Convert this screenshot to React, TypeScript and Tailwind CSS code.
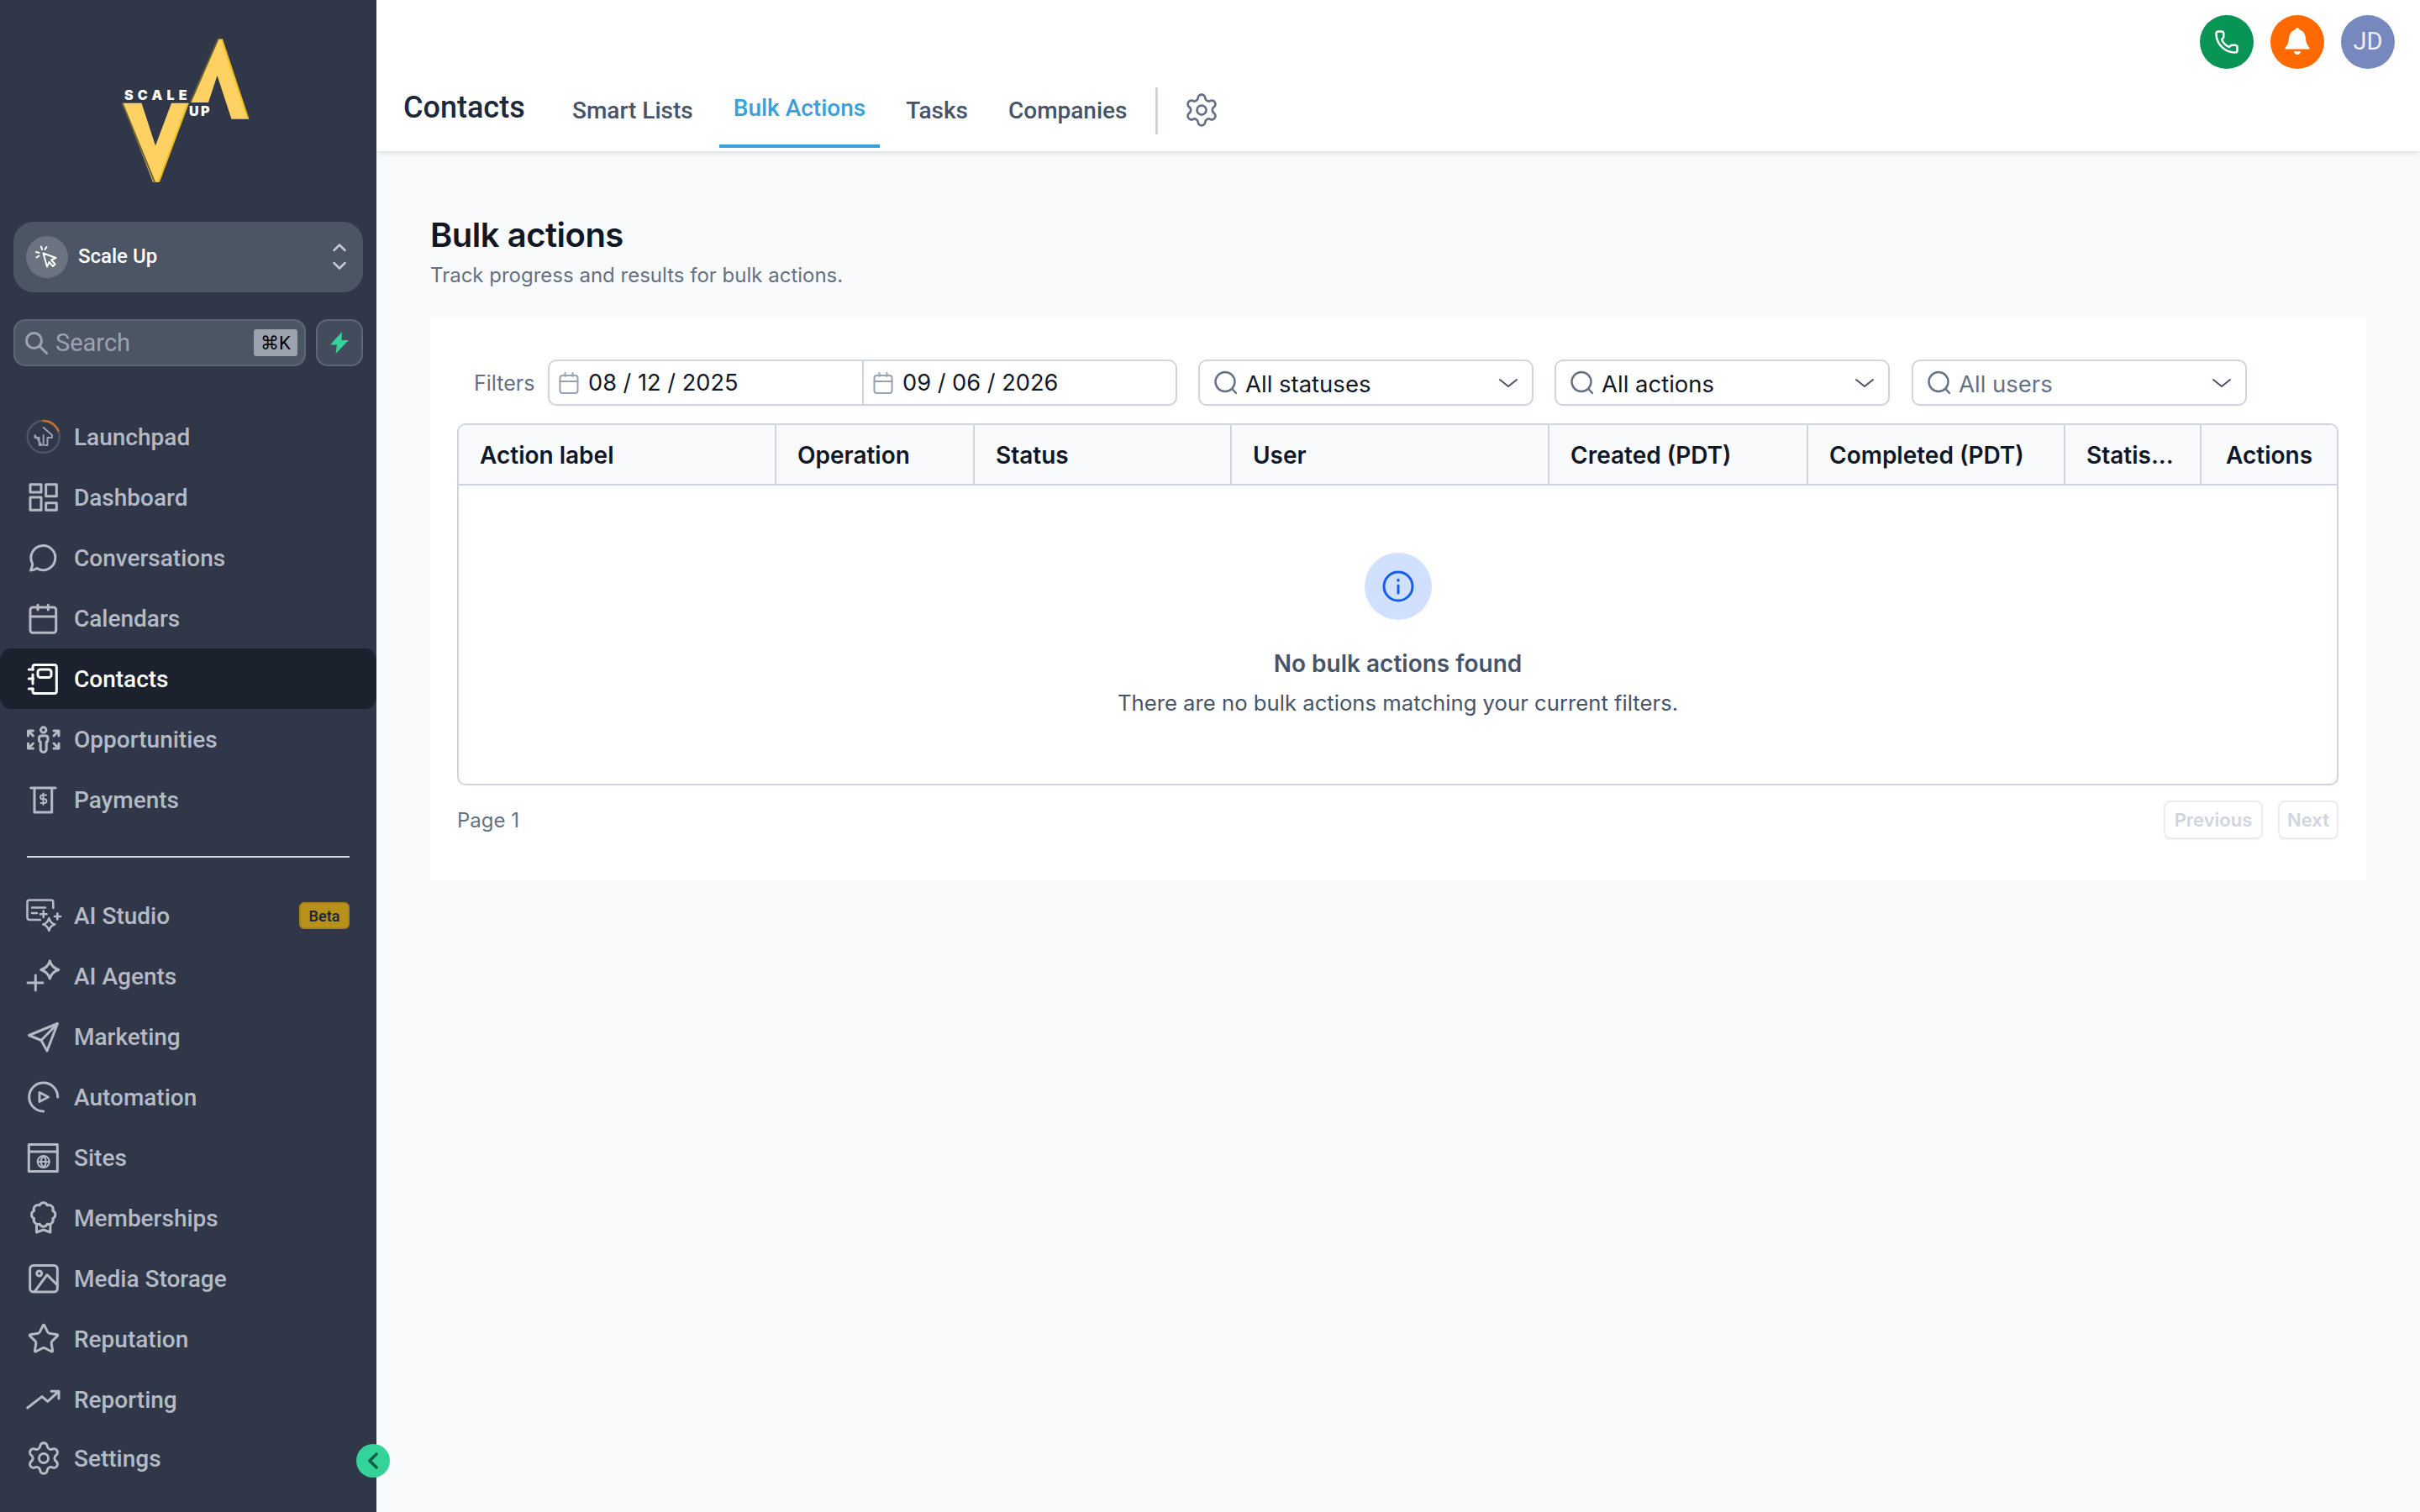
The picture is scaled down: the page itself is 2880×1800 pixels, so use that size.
import React from "react";
import { Settings, Star, Phone } from "lucide-react";

const Svg = ({ children, width = 3 }: { children: React.ReactNode; width?: number }) => (
  <svg width="44" height="44" viewBox="0 0 44 44" fill="none" stroke="currentColor" strokeWidth={width} strokeLinecap="round" strokeLinejoin="round">
    {children}
  </svg>
);

// eight-lobed badge outline
const scallop = () => {
  let d = "";
  for (let i = 0; i <= 8; i++) {
    const a = (i * Math.PI) / 4 - Math.PI / 8;
    const x = (21.7 + 12 * Math.cos(a)).toFixed(1);
    const y = (18 + 12 * Math.sin(a)).toFixed(1);
    d += i === 0 ? `M${x} ${y}` : ` A5 5 0 0 1 ${x} ${y}`;
  }
  return d;
};

const LaunchpadIcon = () => (
  <svg width="44" height="44" viewBox="0 0 44 44" fill="none" strokeLinecap="round" strokeLinejoin="round">
    <circle cx="21.7" cy="22" r="19" stroke="#4b5563" strokeWidth="2.5" />
    <path d="M21.7 3a19 19 0 0 1 17.5 11.5" stroke="#c2722e" strokeWidth="2.5" />
    <path d="M21.7 11 32 20v3h-5.5v9h-3M19.7 32h-3v-9h-5.2v-3Z" stroke="#9aa0ac" strokeWidth="2" />
    <path d="M21.7 20v12" stroke="#9aa0ac" strokeWidth="2" />
  </svg>
);
const DashboardIcon = () => (
  <Svg>
    <rect x="6" y="6.7" width="13" height="9.3" />
    <rect x="24.7" y="6.7" width="12.6" height="14" />
    <rect x="6" y="22" width="13" height="15.3" />
    <rect x="24.7" y="28.7" width="12.6" height="8.6" />
  </Svg>
);
const ChatIcon = () => (
  <Svg>
    <path d="M6.5 37c1.5-3.5 2.5-6 2.1-8A14.5 14.5 0 1 1 14 34.6c-2 1.4-4.5 2.1-7.5 2.4Z" />
  </Svg>
);
const CalendarIcon = () => (
  <Svg>
    <rect x="6" y="9" width="30.7" height="30.3" rx="3" />
    <path d="M6 20h30.7M15 6.3V12M27.3 6.3V12" />
  </Svg>
);
const ContactsIcon = () => (
  <Svg>
    <path d="M9 11V8a2.5 2.5 0 0 1 2.5-2.5h23.3a2.5 2.5 0 0 1 2.5 2.5v29a2.5 2.5 0 0 1-2.5 2.5H11.5A2.5 2.5 0 0 1 9 37v-3M9 17v11" />
    <rect x="15" y="11" width="16" height="9.5" rx="3" />
    <path d="M4.3 11h5M4.3 22h5M4.3 34h5" />
  </Svg>
);
const OpportunitiesIcon = () => (
  <Svg>
    <circle cx="21.7" cy="11" r="3.2" />
    <path d="M16.5 20.5c0-1.5 1-2.5 2.5-2.5h5.4c1.5 0 2.5 1 2.5 2.5v3c0 1-.7 1.5-1.7 1.5v9a3.5 3.5 0 0 1-7 0v-9c-1 0-1.7-.5-1.7-1.5Z" />
    <path d="M3.5 18v-6h6M3.5 12l6 6M40 18v-6h-6M40 12l-6 6M3.5 27v6h6M3.5 33l6-6M40 27v6h-6M40 33l-6-6" />
  </Svg>
);
const PaymentsIcon = () => (
  <Svg>
    <path d="M6.7 8H36M11 8v29h20.7V8" />
    <path d="M25 16.5h-4.5a2.2 2.2 0 0 0 0 4.8h2.5a2.2 2.2 0 0 1 0 4.8h-4.5M21.5 14.5V28" strokeWidth="2" />
  </Svg>
);
const AiStudioIcon = () => (
  <Svg width={2.6}>
    <path d="M18 27H5a2.5 2.5 0 0 1-2.5-2.5V6A2.5 2.5 0 0 1 5 3.5h26A2.5 2.5 0 0 1 33.3 6v7M8 12.5h16M8 19h6" />
    <path d="M28.3 25c1 4 3 6.5 7 7.5-4 1-6 3.5-7 7.5-1-4-3-6.5-7-7.5 4-1 6-3.5 7-7.5ZM21.7 16.5V24M18 20.3h7.5M38.3 19.5v7M35 23h7" />
  </Svg>
);
const AiAgentsIcon = () => (
  <Svg>
    <path d="M12.3 21v18M3 30h18" />
    <path d="M29.3 4c1.5 5.5 4.5 8.5 10.5 10.5-6 2-9 5-10.5 10.5-1.5-5.5-4.5-8.5-10.5-10.5 6-2 9-5 10.5-10.5Z" />
  </Svg>
);
const MarketingIcon = () => (
  <Svg>
    <path d="M38.5 6.5 4.5 20.5 19 26.5 26 39ZM38.5 6.5 19 26.5" />
  </Svg>
);
const AutomationIcon = () => (
  <Svg>
    <path d="M38.7 22A17 17 0 1 0 21.7 39" />
    <path d="M17 16.5 27.5 22 17 27.5Z" />
  </Svg>
);
const SitesIcon = () => (
  <Svg>
    <rect x="4.3" y="6.5" width="34" height="32" />
    <path d="M4.3 15h34" />
    <g strokeWidth="2">
      <circle cx="21.7" cy="27" r="7" />
      <path d="M14.7 27h14M21.7 20c-4 4.5-4 9.5 0 14M21.7 20c4 4.5 4 9.5 0 14" />
    </g>
  </Svg>
);
const MembershipsIcon = () => (
  <Svg>
    <path d={scallop()} />
    <path d="M13.5 30v9l8.2-3 8.2 3v-9" />
  </Svg>
);
const MediaIcon = () => (
  <Svg>
    <rect x="5.7" y="6.5" width="32.6" height="31.5" rx="4" />
    <circle cx="16.7" cy="16" r="3" />
    <path d="M11.7 37 26 17.6 38.3 30" />
  </Svg>
);
const ReportingIcon = () => (
  <Svg>
    <path d="M2.7 32 20 18.6l6.7 5.8L40 12.3M31 12.3h9V21" />
  </Svg>
);

const main = [
  { label: "Launchpad", Icon: LaunchpadIcon },
  { label: "Dashboard", Icon: DashboardIcon },
  { label: "Conversations", Icon: ChatIcon },
  { label: "Calendars", Icon: CalendarIcon },
  { label: "Contacts", Icon: ContactsIcon, active: true },
  { label: "Opportunities", Icon: OpportunitiesIcon },
  { label: "Payments", Icon: PaymentsIcon },
];

const tools = [
  { label: "AI Studio", Icon: AiStudioIcon, beta: true },
  { label: "AI Agents", Icon: AiAgentsIcon },
  { label: "Marketing", Icon: MarketingIcon },
  { label: "Automation", Icon: AutomationIcon },
  { label: "Sites", Icon: SitesIcon },
  { label: "Memberships", Icon: MembershipsIcon },
  { label: "Media Storage", Icon: MediaIcon },
  { label: "Reputation", Icon: () => <div className="flex w-[44px] justify-center"><Star size={40} strokeWidth={1.8} /></div> },
  { label: "Reporting", Icon: ReportingIcon },
  { label: "Settings", Icon: () => <Settings size={44} strokeWidth={1.6} /> },
];

const NavRow = ({ label, Icon, active, beta }: { label: string; Icon: React.ComponentType; active?: boolean; beta?: boolean }) => (
  <div className={`flex h-[72px] items-center gap-[14px] rounded-[14px] pl-[30px] pr-[32px] text-[28px] font-medium ${active ? "bg-[#1b212d] text-white" : "text-[#b5bac4]"}`}>
    <Icon />
    <span className="mt-[1px]">{label}</span>
    {beta && (
      <span className="ml-auto flex h-[32px] w-[60px] items-center justify-center rounded-[6px] border-2 border-[#a5841c] bg-[#b8911a] text-[18px] font-semibold text-[#1d2a3a]">
        Beta
      </span>
    )}
  </div>
);

const Logo = () => (
  <svg width="160" height="180" viewBox="140 40 160 180" className="ml-[140px]">
    <path d="M145.5 122.7h23l16.5 50.7 19-50.7h20l-35 94h-7Z" fill="#fdd262" />
    <path d="M145.5 122.7 184 216.7" stroke="#6b6136" strokeWidth="2" />
    <path d="M224 122.7 189 216.7" stroke="#e9bb16" strokeWidth="2" />
    <path d="M226.5 122 259.5 46.5h5L296 141.7h-20.5L258.5 90 248 122Z" fill="#fdd262" />
    <path d="M226.5 122 259.5 46.5" stroke="#6b6136" strokeWidth="2" />
    <path d="M264 46.5 295.5 141.7" stroke="#e9bb16" strokeWidth="2" />
    <text x="148" y="119" fill="#fff" fontFamily="Inter" fontWeight="900" fontSize="16" letterSpacing="5.2">SCALE</text>
    <text x="225" y="138" fill="#fff" fontFamily="Inter" fontWeight="900" fontSize="16" letterSpacing="2.5">UP</text>
  </svg>
);

const Sidebar = () => (
  <aside className="relative flex h-full w-[448px] shrink-0 flex-col bg-[#2f3749] font-['Roboto',sans-serif]">
    <div className="h-[264px] pt-[40px]">
      <Logo />
    </div>
    <div className="mx-[16px] flex h-[84px] items-center rounded-[24px] bg-[#4b5563] pl-[15px] pr-[20px]">
      <div className="flex h-[50px] w-[50px] items-center justify-center rounded-full bg-[#6b7280]">
        <svg width="28" height="28" viewBox="0 0 28 28" fill="none" stroke="#fff" strokeWidth="2" strokeLinecap="round" strokeLinejoin="round">
          <path d="M9.5 9.5 24.5 15 19 17.5l4.5 5-2.5 2.5-4.5-5L14 25.5Z" />
          <path d="M7 1.5 8 5M1 8l3.5 1M1.5 14.5l3-2M13.5 2l-2 3" />
        </svg>
      </div>
      <span className="ml-[12px] -mt-[3px] text-[24px] font-medium text-white">Scale Up</span>
      <svg className="ml-auto" width="16" height="32" viewBox="0 0 16 32" fill="none" stroke="#c4c8d0" strokeWidth="2.5" strokeLinecap="round" strokeLinejoin="round">
        <path d="M1.5 8 8 1.5 14.5 8M1.5 23 8 29.5 14.5 23" />
      </svg>
    </div>
    <div className="mx-[16px] mt-[32px] flex gap-[12px]">
      <div className="flex h-[56px] w-[348px] items-center rounded-[14px] border-2 border-[#5d6675] bg-[#4b5563] pl-[11px] pr-[8px]">
        <svg width="28" height="28" viewBox="0 0 28 28" fill="none" stroke="#9ca3af" strokeWidth="3" strokeLinecap="round">
          <circle cx="11.5" cy="11.5" r="9" />
          <path d="m18 18 8.5 8.5" />
        </svg>
        <span className="ml-[9px] mt-[1px] text-[29px] text-[#9ca3af]">Search</span>
        <span className="ml-auto flex h-[32px] w-[52px] items-center justify-center rounded-[3px] bg-[#9ca3af] text-[22px] text-black">⌘K</span>
      </div>
      <div className="flex h-[56px] w-[56px] items-center justify-center rounded-[14px] border-2 border-[#5d6675] bg-[#434c5c]">
        <svg width="24" height="28" viewBox="0 0 24 28" fill="#34d399">
          <path d="M15 1 1 16.5h8L7.5 27 23 11h-8.5Z" />
        </svg>
      </div>
    </div>
    <nav className="mt-[48px] flex flex-col">
      {main.map((item) => (
        <NavRow key={item.label} {...item} />
      ))}
    </nav>
    <div className="mx-[32px] mt-[31px] h-[2px] bg-[#d5d8de]" />
    <nav className="mt-[33px] flex flex-col [&>*:last-child]:-mt-[2px]">
      {tools.map((item) => (
        <NavRow key={item.label} {...item} />
      ))}
    </nav>
    <button className="absolute left-[424px] top-[1719px] flex h-[40px] w-[40px] items-center justify-center rounded-full bg-[#34d399]">
      <svg width="14" height="20" viewBox="0 0 14 20" fill="none" stroke="#0f5c47" strokeWidth="3.5" strokeLinecap="round" strokeLinejoin="round">
        <path d="M11 2 3 10l8 8" />
      </svg>
    </button>
  </aside>
);

const Tab = ({ label, active, className }: { label: string; active?: boolean; className: string }) => (
  <div className={`flex h-[84px] items-center border-b-4 font-['Roboto',sans-serif] text-[28px] font-medium ${active ? "border-[#38a0db] pb-[6px] text-[#38a0db]" : "border-transparent text-[#475467]"} ${className}`}>
    {label}
  </div>
);

const Header = () => (
  <header className="h-[180px] shrink-0 bg-white shadow-[0_2px_6px_rgba(16,24,40,0.12)]">
    <div className="flex h-[92px] items-start justify-end gap-[20px] pr-[30px] pt-[18px]">
      <div className="flex h-[64px] w-[64px] items-center justify-center rounded-full bg-[#079455] text-white">
        <Phone size={30} strokeWidth={2} />
      </div>
      <div className="flex h-[64px] w-[64px] items-center justify-center rounded-full bg-[#ff6900]">
        <svg width="32" height="36" viewBox="0 0 32 36" fill="#fff">
          <circle cx="16" cy="3.5" r="2.5" />
          <path d="M16 3c-6.5 0-9.5 5-10 11-.4 5-2 8-4.5 11-.5.8 0 1.5 1 1.5h27c1 0 1.5-.7 1-1.5-2.5-3-4.1-6-4.5-11C25.5 8 22.5 3 16 3Z" />
          <path d="M12 29h8c0 2.5-1.8 4-4 4s-4-1.500-4-4Z" />
        </svg>
      </div>
      <div className="flex h-[64px] w-[64px] items-center justify-center rounded-full bg-[#7688bd] font-['Roboto',sans-serif] text-[29px] text-[#eef0f7]">JD</div>
    </div>
    <div className="flex items-start pl-[32px]">
      <div className="flex h-[72px] w-[144px] items-center whitespace-nowrap font-['Roboto',sans-serif] text-[36px] font-medium text-[#1d2939]">Contacts</div>
      <Tab label="Smart Lists" className="ml-[57px]" />
      <Tab label="Bulk Actions" active className="ml-[31px] px-[17px]" />
      <Tab label="Tasks" className="ml-[31px]" />
      <Tab label="Companies" className="ml-[48px]" />
      <div className="ml-[33px] mt-[12px] h-[56px] w-[3px] bg-[#d0d5dd]" />
      <div className="ml-[30px] mt-[17px] text-[#667085]">
        <Settings size={44} strokeWidth={1.5} />
      </div>
    </div>
  </header>
);

const Calendar = () => (
  <svg width="24" height="28" viewBox="0 0 24 28" fill="none" stroke="#98a2b3" strokeWidth="2" strokeLinecap="round">
    <rect x="1.5" y="5" width="21" height="21" rx="3" />
    <path d="M1.5 12h21M7.5 2v4M16.5 2v4" />
  </svg>
);

const FilterSelect = ({ label, muted, className }: { label: string; muted?: boolean; className?: string }) => (
  <div className={`flex h-[55px] w-[399px] items-center rounded-[10px] border-2 border-[#d0d5dd] bg-white pl-[16px] pr-[16px] shadow-[0_1px_2px_rgba(16,24,40,0.05)] ${className ?? ""}`}>
    <svg width="30" height="30" viewBox="0 0 30 30" fill="none" stroke="#667085" strokeWidth="2.4" strokeLinecap="round">
      <circle cx="14" cy="13.5" r="11.5" />
      <path d="m22.5 22 4.5 5" />
    </svg>
    <span className={`ml-[8px] mt-[5px] text-[27.5px] ${muted ? "text-[#667085]" : "text-[#101828]"}`}>{label}</span>
    <svg className="ml-auto" width="24" height="12" viewBox="0 0 24 12" fill="none" stroke="#475467" strokeWidth="2" strokeLinecap="round" strokeLinejoin="round">
      <path d="m2 2 10 8 10-8" />
    </svg>
  </div>
);

const columns = [
  { label: "Action label", w: "w-[378px]" },
  { label: "Operation", w: "w-[236px]" },
  { label: "Status", w: "w-[306px]" },
  { label: "User", w: "w-[378px]" },
  { label: "Created (PDT)", w: "w-[308px]" },
  { label: "Completed (PDT)", w: "w-[306px]" },
  { label: "Statis...", w: "w-[162px]" },
  { label: "Actions", w: "flex-1 !pl-[29px]" },
];

const BulkActions = () => (
  <div className="px-[64px] pt-[76px]">
    <h1 className="text-[40px] font-semibold leading-[48px] tracking-[-0.5px] text-[#101828]">Bulk actions</h1>
    <p className="mt-[6px] text-[24px] leading-[36px] text-[#667080]">Track progress and results for bulk actions.</p>
    <section className="mt-[31px] h-[671px] bg-white pl-[32px] pr-[33px] pt-[51px]">
      <div className="flex items-center">
        <span className="ml-[20px] mt-[2px] w-[88px] text-[25px] text-[#667080]">Filters</span>
        <div className="flex h-[55px] w-[749px] rounded-[10px] border-2 border-[#d0d5dd] bg-white shadow-[0_1px_2px_rgba(16,24,40,0.05)]">
          <div className="flex w-[374px] items-center gap-[11px] border-r-2 border-[#d0d5dd] pl-[11px] text-[27.2px] text-[#101828]">
            <Calendar />
            <span className="mt-[1px]">08 / 12 / 2025</span>
          </div>
          <div className="flex flex-1 items-center gap-[11px] pl-[11px] text-[27.2px] text-[#101828]">
            <Calendar />
            <span className="mt-[1px]">09 / 06 / 2026</span>
          </div>
        </div>
        <FilterSelect label="All statuses" className="ml-[25px]" />
        <FilterSelect label="All actions" className="ml-[25px]" />
        <FilterSelect label="All users" muted className="ml-[26px]" />
      </div>
      <div className="mt-[21px] h-[431px] rounded-[10px] border-2 border-[#d0d5dd]">
        <div className="flex h-[72px] rounded-t-[8px] border-b-2 border-[#d0d5dd] bg-[#f9fafb]">
          {columns.map((c, i) => (
            <div key={c.label} className={`flex items-center pl-[25px] pt-[1px] text-[28px] font-semibold text-[#101828] ${c.w} ${i < 7 ? "border-r-2 border-[#d0d5dd]" : ""}`}>
              {c.label}
            </div>
          ))}
        </div>
        <div className="flex flex-col items-center pt-[80px]">
          <div className="flex h-[80px] w-[80px] items-center justify-center rounded-full bg-[#d1e0ff]">
            <svg width="38" height="38" viewBox="0 0 38 38" fill="none" stroke="#155eef" strokeWidth="3" strokeLinecap="round">
              <circle cx="19" cy="19" r="17" />
              <path d="M19 18v9" />
              <path d="M19 11.5v.5" strokeWidth="3.5" />
            </svg>
          </div>
          <div className="mt-[34px] text-[28px] font-semibold leading-[36px] text-[#475467]">No bulk actions found</div>
          <div className="mt-[11px] text-[25.7px] leading-[36px] text-[#475467]">There are no bulk actions matching your current filters.</div>
        </div>
      </div>
      <div className="mt-[18px] flex items-center">
        <span className="mt-[2px] text-[24px] text-[#637381]">Page 1</span>
        <button className="ml-auto h-[46px] w-[118px] rounded-[8px] border-2 border-[#eaecf0] text-[22px] font-semibold text-[#d0d5dd] shadow-[0_1px_2px_rgba(16,24,40,0.05)]">Previous</button>
        <button className="ml-[18px] h-[46px] w-[72px] rounded-[8px] border-2 border-[#eaecf0] text-[22px] font-semibold text-[#d0d5dd] shadow-[0_1px_2px_rgba(16,24,40,0.05)]">Next</button>
      </div>
    </section>
  </div>
);

export default function App() {
  return (
    <div className="flex h-[1800px] w-[2880px] overflow-hidden bg-[#f9fafb] font-['Inter',sans-serif]">
      <Sidebar />
      <main className="flex min-w-0 flex-1 flex-col">
        <Header />
        <BulkActions />
      </main>
    </div>
  );
}
